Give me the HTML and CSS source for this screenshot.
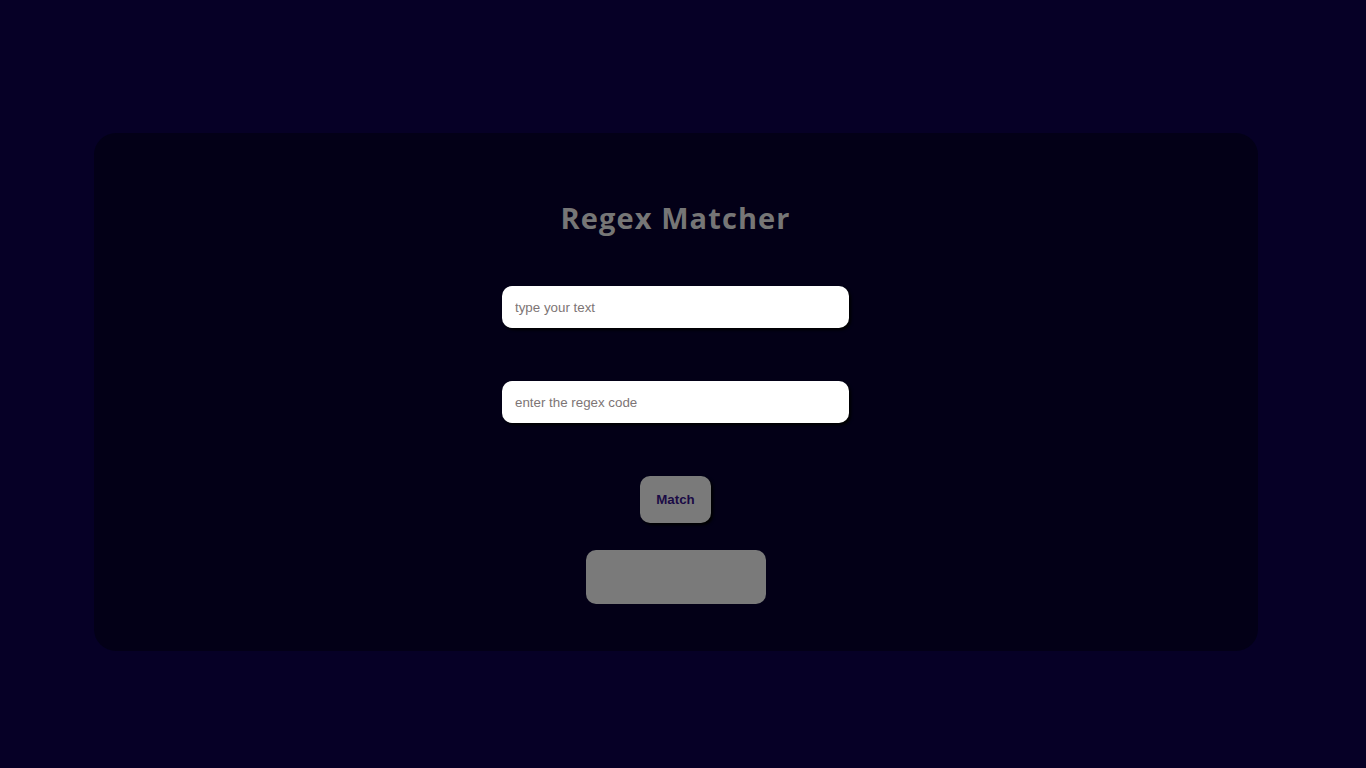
FILE: index.html
```html
<!DOCTYPE html>
<html lang="en">
<head>
<meta charset="utf-8">
<title>Regex Matcher</title>
<link rel="stylesheet" href="styles.css">
</head>
<body>
  <main class="card">
    <h1 class="title">Regex Matcher</h1>
    <input class="field field-text" type="text" placeholder="type your text">
    <input class="field field-regex" type="text" placeholder="enter the regex code">
    <button class="match-btn" type="button">Match</button>
    <div class="result"></div>
  </main>
</body>
</html>
```

FILE: styles.css
```css
html {
  background: #060026;
  overflow-y: scroll;
}

body {
  height: 100vh;
  margin: 8px 23px 8px 8px;
  display: flex;
  align-items: center;
  justify-content: center;
  background: #060026;
  font-family: "Liberation Sans", Arial, sans-serif;
}

.card {
  box-sizing: border-box;
  width: 1164px;
  flex-shrink: 0;
  padding: 65px 0 47px;
  background: #030017;
  border-radius: 22px;
  display: flex;
  flex-direction: column;
  align-items: center;
}

.title {
  margin: 0 0 48px;
  font-family: "Open Sans", "Noto Sans", sans-serif;
  font-weight: 700;
  font-size: 29px;
  letter-spacing: 1.1px;
  line-height: 40px;
  color: #767676;
}

.field {
  box-sizing: border-box;
  width: 347px;
  height: 42px;
  padding: 0 13px;
  border: none;
  border-radius: 10px;
  background: #ffffff;
  box-shadow: 2px 2px 3px #000000;
  font-family: "Liberation Sans", Arial, sans-serif;
  font-size: 13.33px;
  color: #222;
  outline: none;
}

.field::placeholder {
  color: #7d7575;
}

.field-text {
  margin-bottom: 53px;
}

.field-regex {
  margin-bottom: 53px;
}

.match-btn {
  box-sizing: border-box;
  width: 71px;
  height: 47px;
  padding: 0;
  border: none;
  border-radius: 10px;
  background: #7a7a7a;
  box-shadow: 2px 2px 3px #000000;
  font-family: "Liberation Sans", Arial, sans-serif;
  font-weight: 700;
  font-size: 13.33px;
  color: #1a0b45;
  margin-bottom: 27px;
}

.result {
  width: 180px;
  height: 54px;
  border-radius: 10px;
  background: #7a7a7a;
}
```
